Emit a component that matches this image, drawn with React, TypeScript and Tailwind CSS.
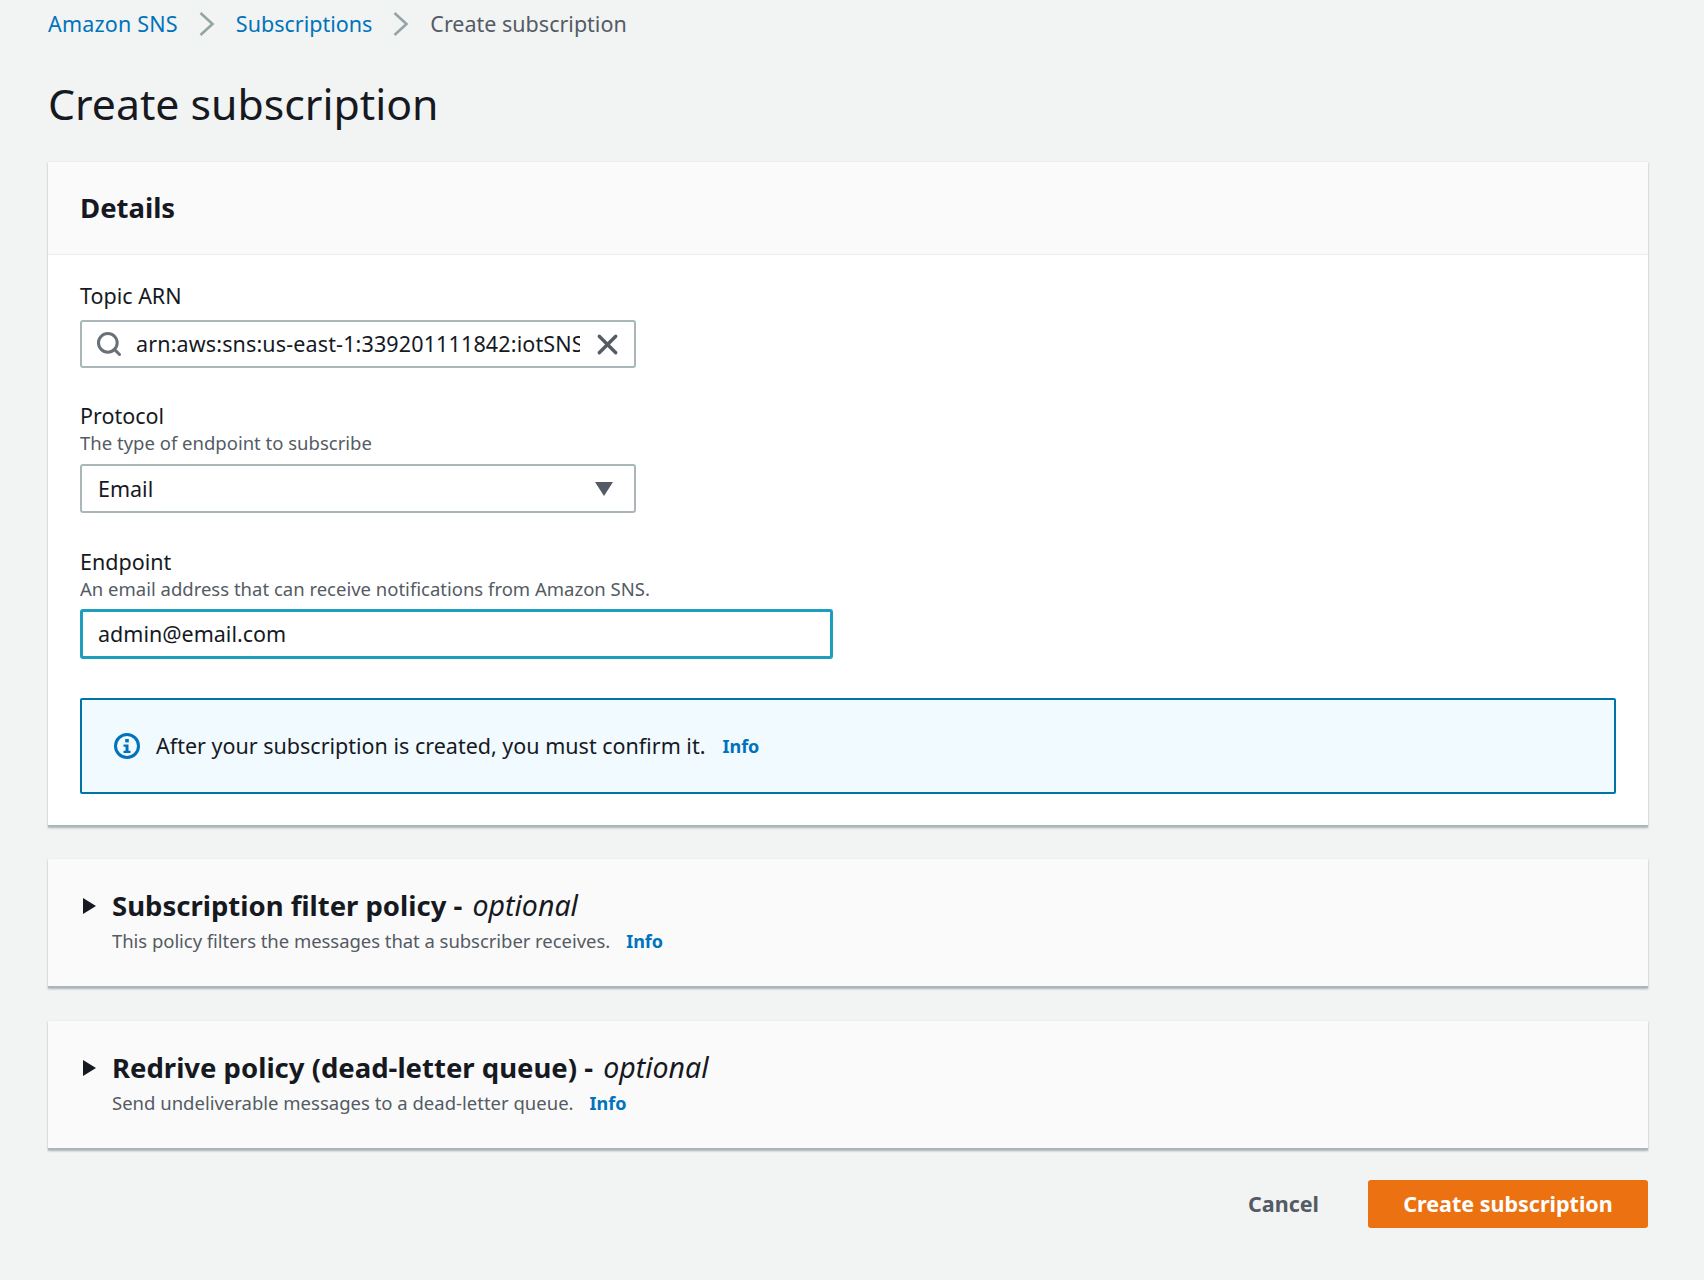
import { Search, X } from "lucide-react";

function Chevron() {
  return (
    <svg width="16" height="26" viewBox="0 0 16 26" fill="none" className="mx-[21px]">
      <path d="M1.5 2l12 11-12 11" stroke="#95a5a6" strokeWidth="2.6" />
    </svg>
  );
}

function InfoLink() {
  return <span className="font-bold text-[18px] text-[#0073bb]">Info</span>;
}

function Field({ label, hint }: { label: string; hint?: string }) {
  return (
    <div className="flex flex-col">
      <span className="text-[21.5px] leading-[28px] text-[#16191f]">{label}</span>
      {hint && <span className="text-[18.5px] leading-[26px] text-[#545b64]">{hint}</span>}
    </div>
  );
}

function Caret() {
  return (
    <svg width="16" height="18" viewBox="0 0 16 18" className="shrink-0">
      <path d="M3 1v16l13-8z" fill="#16191f" />
    </svg>
  );
}

function PolicyCard({ title, desc, descClass }: { title: string; desc: string; descClass?: string }) {
  return (
    <section className="bg-[#fafafa] border-b-2 border-[#aab7b8] shadow-[0_1px_2px_rgba(0,28,36,0.3)] px-[32px] pt-[27px] pb-[32px]">
      <div className="flex items-center">
        <Caret />
        <h2 className="ml-[16px] text-[27.5px] leading-[38px] font-bold text-[#16191f]">
          {title} - <em className="ml-[3px] font-normal text-[28.5px]">optional</em>
        </h2>
      </div>
      <div className="ml-[32px] mt-[3px] flex items-center gap-[16px] text-[18.5px] leading-[26px] text-[#545b64]">
        <span className={descClass}>{desc}</span>
        <InfoLink />
      </div>
    </section>
  );
}

export default function App() {
  return (
    <div className="min-h-[1280px] bg-[#f2f3f3] pl-[48px] pr-[56px] font-['Noto_Sans',sans-serif]">
      <nav className="flex items-center h-[48px] text-[21.5px]">
        <span className="text-[#0073bb] tracking-[0.2px]">Amazon SNS</span>
        <Chevron />
        <span className="text-[#0073bb]">Subscriptions</span>
        <Chevron />
        <span className="text-[#545b64]">Create subscription</span>
      </nav>

      <h1 className="mt-[27px] text-[42.75px] leading-[58px] text-[#16191f]">Create subscription</h1>

      <section className="mt-[29px] bg-white border-b-2 border-[#aab7b8] shadow-[0_1px_2px_rgba(0,28,36,0.3)]">
        <div className="bg-[#fafafa] border-b border-[#eaeded] h-[93px] px-[32px] flex items-center">
          <h2 className="text-[27.5px] font-bold text-[#16191f]">Details</h2>
        </div>
        <div className="px-[32px] pt-[27px] pb-[31px]">
          <Field label="Topic ARN" />
          <div className="mt-[10px] w-[556px] h-[48px] bg-white border-2 border-[#aab7b8] rounded-[3px] flex items-center pl-[13px] pr-[10px]">
            <Search size={28} strokeWidth={2.6} className="text-[#687078] shrink-0" />
            <span className="ml-[13px] flex-1 overflow-hidden whitespace-nowrap text-[21.5px] tracking-[0.14px] text-[#16191f]">
              arn:aws:sns:us-east-1:339201111842:iotSNSTopic
            </span>
            <X size={33} strokeWidth={2.4} className="ml-[11px] text-[#545b64] shrink-0" />
          </div>

          <div className="mt-[34px]">
            <Field label="Protocol" hint="The type of endpoint to subscribe" />
          </div>
          <div className="mt-[8px] w-[556px] h-[49px] bg-white border-2 border-[#aab7b8] rounded-[3px] flex items-center justify-between pl-[16px] pr-[20px]">
            <span className="pt-[1px] text-[21.5px] text-[#16191f]">Email</span>
            <svg width="20" height="16" viewBox="0 0 20 16">
              <path d="M1 1h18l-9 14z" fill="#545b64" />
            </svg>
          </div>

          <div className="mt-[35px]">
            <Field label="Endpoint" hint="An email address that can receive notifications from Amazon SNS." />
          </div>
          <div className="mt-[7px] w-[753px] h-[50px] bg-white border-[3px] border-[#1d9ebd] rounded-[3px] flex items-center pl-[15px]">
            <span className="text-[21.5px] text-[#16191f]">admin@email.com</span>
          </div>

          <div className="mt-[39px] h-[96px] bg-[#f1faff] border-2 border-[#0073a8] rounded-[2px] flex items-center pl-[31px]">
            <svg width="28" height="28" viewBox="0 0 28 28" fill="none" className="shrink-0">
              <circle cx="14" cy="14" r="11.5" stroke="#0073bb" strokeWidth="3" />
              <rect x="12.2" y="7" width="3.6" height="3.4" fill="#0073bb" />
              <path d="M10.5 12.5h5v6.2h2v2.2h-7v-2.2h2v-4h-2z" fill="#0073bb" />
            </svg>
            <span className="ml-[15px] text-[21.5px] text-[#16191f]">After your subscription is created, you must confirm it.</span>
            <span className="ml-[17px] pt-[1px]">
              <InfoLink />
            </span>
          </div>
        </div>
      </section>

      <div className="mt-[32px]">
        <PolicyCard
          title="Subscription filter policy"
          desc="This policy filters the messages that a subscriber receives."
          descClass="tracking-[-0.05px]"
        />
      </div>
      <div className="mt-[33px]">
        <PolicyCard title="Redrive policy (dead-letter queue)" desc="Send undeliverable messages to a dead-letter queue." />
      </div>

      <div className="mt-[30px] flex items-center justify-end">
        <span className="text-[21.5px] font-bold text-[#545b64]">Cancel</span>
        <button className="ml-[49px] w-[280px] h-[48px] bg-[#ec7211] rounded-[3px] text-[21.5px] font-bold text-white">
          Create subscription
        </button>
      </div>
    </div>
  );
}
